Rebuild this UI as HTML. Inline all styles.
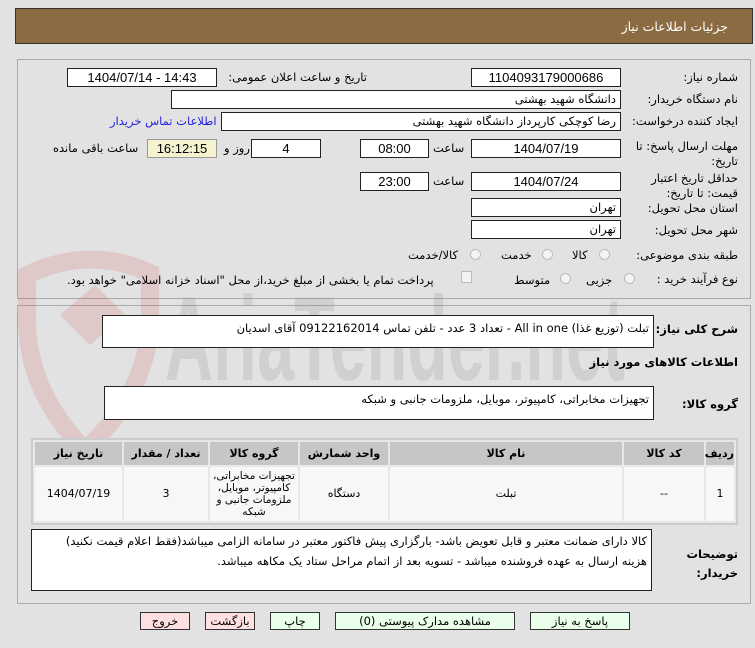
<!DOCTYPE html>
<html><head><meta charset="utf-8"><style>
*{margin:0;padding:0;box-sizing:border-box}
body{width:755px;height:648px;background:#e2e2e2;position:relative;overflow:hidden;font-family:"DejaVu Sans","Liberation Sans",sans-serif;font-size:11px;color:#000}
.a{position:absolute}
.hdr{left:15px;top:8px;width:738px;height:36px;background:#8b6b41;border:1px solid #333}
.hdr span{position:absolute;right:24px;top:10px;color:#fff;font-size:12.5px}
.pnl{border:1px solid #aaa;background:#e2e2e2}
.box{position:absolute;background:#fff;border:1px solid #222;height:19px;text-align:center;line-height:17px;font-size:13px;font-family:"Liberation Sans","DejaVu Sans",sans-serif}
.bx{text-align:right;padding-right:4px;font-family:"DejaVu Sans",sans-serif;font-size:11.5px}
.lbl{position:absolute;direction:rtl;white-space:nowrap;text-align:right;font-size:11.5px}
.rad{position:absolute;width:11px;height:11px;border:1px solid #bbb;border-radius:50%;background:#f4f4f4}
.ta{position:absolute;background:#fff;border:1px solid #222;direction:rtl;text-align:right;padding:3px 4px;font-size:11.5px;line-height:18px}
table{position:absolute;left:31px;top:438px;width:707px;height:85px;border:2px solid #ccc;border-collapse:separate;border-spacing:2px;background:#e8e8e8;direction:rtl;table-layout:fixed}
th{background:#c6c6c6;height:23px;font-size:11px;font-weight:bold}
td{background:#f7f7f7;text-align:center;font-size:11px;line-height:12.5px;height:54px;padding:0;overflow:hidden}
.btn{position:absolute;top:612px;height:18px;border:1px solid #333;text-align:center;font-size:11.5px;line-height:16px;direction:rtl}
.g{background:#eaffea}.p{background:#ffe0e0}
b{font-weight:bold}
</style></head><body>
<div class="a hdr"><span>جزئیات اطلاعات نیاز</span></div>
<div class="a pnl" style="left:17px;top:59px;width:734px;height:240px"></div>
<div class="a pnl" style="left:17px;top:305px;width:734px;height:299px"></div>

<svg class="a" style="left:15px;top:245px" width="620" height="220" viewBox="0 0 620 220">
<g opacity="0.16">
<path d="M12 30 Q75 0 135 28 L135 80 Q130 150 70 205 Q15 150 12 80Z" fill="none" stroke="#c44" stroke-width="18"/>
<path d="M45 70 L80 40 L110 70 L75 100Z" fill="#c44"/>
<text x="150" y="135" font-family="Liberation Sans,sans-serif" font-size="120" font-weight="bold" fill="#777" textLength="460" lengthAdjust="spacingAndGlyphs">AriaTender.net</text>
</g></svg>

<div class="lbl" style="right:17px;top:70px">شماره نیاز:</div>
<div class="box" style="left:471px;top:68px;width:150px">1104093179000686</div>
<div class="lbl" style="left:221px;top:70px;width:146px">تاریخ و ساعت اعلان عمومی:</div>
<div class="box" style="left:67px;top:68px;width:150px">1404/07/14 - 14:43</div>

<div class="lbl" style="right:17px;top:92px">نام دستگاه خریدار:</div>
<div class="box bx" style="left:171px;top:90px;width:450px">دانشگاه شهید بهشتی</div>

<div class="lbl" style="right:17px;top:114px">ایجاد کننده درخواست:</div>
<div class="box bx" style="left:221px;top:112px;width:400px">رضا کوچکی کارپرداز دانشگاه شهید بهشتی</div>
<div class="lbl" style="left:110px;top:114px;color:#2222dd">اطلاعات تماس خریدار</div>

<div class="lbl" style="right:17px;top:139px;line-height:15px">مهلت ارسال پاسخ: تا<br>تاریخ:</div>
<div class="box" style="left:471px;top:139px;width:150px">1404/07/19</div>
<div class="lbl" style="left:433px;top:141px">ساعت</div>
<div class="box" style="left:360px;top:139px;width:69px">08:00</div>
<div class="box" style="left:251px;top:139px;width:70px">4</div>
<div class="lbl" style="left:224px;top:141px">روز و</div>
<div class="box" style="left:147px;top:139px;width:70px;background:#f5f2d0;border-color:#999">16:12:15</div>
<div class="lbl" style="left:53px;top:141px">ساعت باقی مانده</div>

<div class="lbl" style="right:17px;top:171px;line-height:15px">حداقل تاریخ اعتبار<br>قیمت: تا تاریخ:</div>
<div class="box" style="left:471px;top:172px;width:150px">1404/07/24</div>
<div class="lbl" style="left:433px;top:174px">ساعت</div>
<div class="box" style="left:360px;top:172px;width:69px">23:00</div>

<div class="lbl" style="right:17px;top:201px">استان محل تحویل:</div>
<div class="box bx" style="left:471px;top:198px;width:150px">تهران</div>
<div class="lbl" style="right:17px;top:223px">شهر محل تحویل:</div>
<div class="box bx" style="left:471px;top:220px;width:150px">تهران</div>

<div class="lbl" style="right:17px;top:248px">طبقه بندی موضوعی:</div>
<div class="rad" style="left:599px;top:249px"></div><div class="lbl" style="left:572px;top:248px">کالا</div>
<div class="rad" style="left:542px;top:249px"></div><div class="lbl" style="left:501px;top:248px">خدمت</div>
<div class="rad" style="left:470px;top:249px"></div><div class="lbl" style="left:408px;top:248px">کالا/خدمت</div>

<div class="lbl" style="right:17px;top:272px">نوع فرآیند خرید :</div>
<div class="rad" style="left:624px;top:273px"></div><div class="lbl" style="left:586px;top:273px">جزیی</div>
<div class="rad" style="left:560px;top:273px"></div><div class="lbl" style="left:514px;top:273px">متوسط</div>
<div class="a" style="left:461px;top:271px;width:11px;height:12px;border:1px solid #bbb;background:#f4f4f4"></div>
<div class="lbl" style="left:67px;top:273px">پرداخت تمام یا بخشی از مبلغ خرید،از محل "اسناد خزانه اسلامی" خواهد بود.</div>

<div class="lbl" style="right:17px;top:322px"><b>شرح کلی نیاز:</b></div>
<div class="ta" style="left:102px;top:315px;width:552px;height:33px">تبلت (توزیع غذا) All in one - تعداد 3 عدد - تلفن تماس 09122162014 آقای اسدیان</div>
<div class="lbl" style="right:17px;top:355px"><b>اطلاعات کالاهای مورد نیاز</b></div>
<div class="lbl" style="right:17px;top:397px"><b>گروه کالا:</b></div>
<div class="ta" style="left:104px;top:386px;width:550px;height:34px">تجهیزات مخابراتی، کامپیوتر، موبایل، ملزومات جانبی و شبکه</div>

<table><tr><th style="width:28px">ردیف</th><th style="width:80px">کد کالا</th><th style="width:232px">نام کالا</th><th style="width:88px">واحد شمارش</th><th style="width:88px">گروه کالا</th><th style="width:84px">تعداد / مقدار</th><th>تاریخ نیاز</th></tr>
<tr><td>1</td><td>--</td><td>تبلت</td><td>دستگاه</td><td style="font-size:10.5px;line-height:12px">تجهیزات مخابراتی، کامپیوتر، موبایل، ملزومات جانبی و شبکه</td><td>3</td><td>1404/07/19</td></tr></table>

<div class="lbl" style="right:17px;top:545px;line-height:19px"><b>توضیحات<br>خریدار:</b></div>
<div class="ta" style="left:31px;top:529px;width:621px;height:62px;line-height:20px;padding-top:1px">کالا دارای ضمانت معتبر و قابل تعویض باشد- بارگزاری پیش فاکتور معتبر در سامانه الزامی میباشد(فقط اعلام قیمت نکنید)<br>هزینه ارسال به عهده فروشنده میباشد - تسویه بعد از اتمام مراحل ستاد یک مکاهه میباشد.</div>

<div class="btn p" style="left:140px;width:50px">خروج</div>
<div class="btn p" style="left:205px;width:50px">بازگشت</div>
<div class="btn g" style="left:270px;width:50px">چاپ</div>
<div class="btn g" style="left:335px;width:180px">مشاهده مدارک پیوستی (0)</div>
<div class="btn g" style="left:530px;width:100px">پاسخ به نیاز</div>
</body></html>
